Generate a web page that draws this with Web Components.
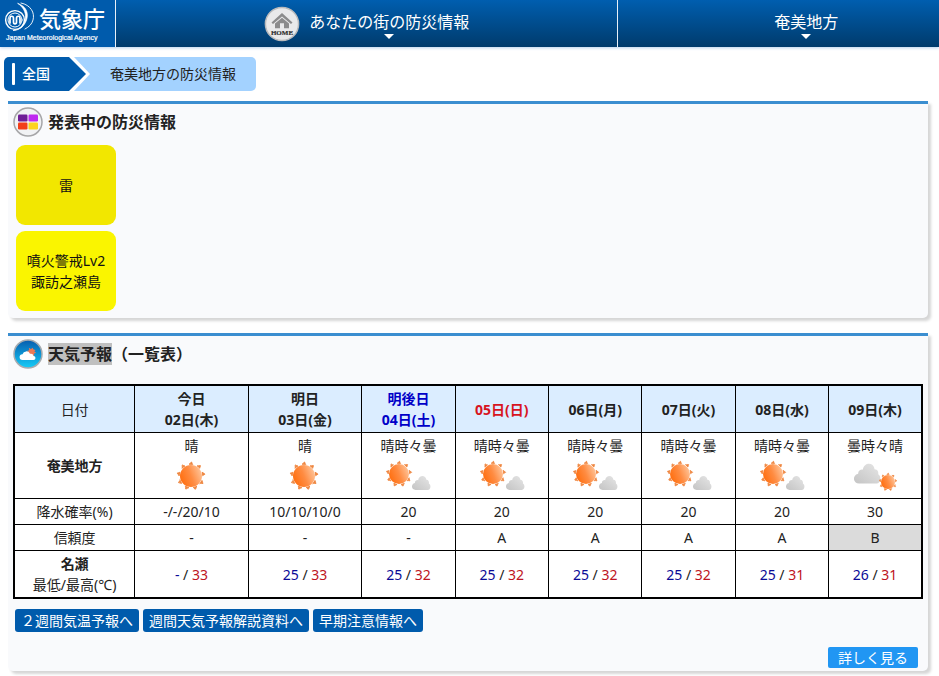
<!DOCTYPE html>
<html lang="ja">
<head>
<meta charset="utf-8">
<meta name="viewport" content="width=device-width, initial-scale=1">
<title>奄美地方の防災情報</title>
<style>
  body {
    margin: 0;
    background: #fff;
    color: #222;
    font-family: "Noto Sans", "Noto Sans CJK JP", sans-serif;
    font-size: 14px;
    line-height: 21px;
  }
  main { padding: 0 11px 5px 8px; display: grid; gap: 15px; }
  mark { background: #c0c0c0; color: inherit; }
  .more { text-align: right; margin: 15px 5px 0 0; }
  .links { display: flex; flex-wrap: wrap; gap: 4px; padding-left: 2px; margin-top: 10px; }
</style>
</head>
<body>
<site-header>
  <nav-entry slot="home" icon>あなたの街の防災情報</nav-entry>
  <nav-entry slot="area">奄美地方</nav-entry>
</site-header>
<bread-crumb>
  <span slot="root">全国</span>
  <span slot="current">奄美地方の防災情報</span>
</bread-crumb>
<main>
  <info-card icon="warning">
    <span slot="title">発表中の防災情報</span>
    <alert-list>
      <alert-tile tone="thunder">雷</alert-tile>
      <alert-tile tone="volcano">噴火警戒Lv2<br>諏訪之瀬島</alert-tile>
    </alert-list>
  </info-card>
  <info-card icon="weather">
    <span slot="title"><mark>天気予報</mark>（一覧表）</span>
    <forecast-table></forecast-table>
    <div class="links">
      <link-button>２週間気温予報へ</link-button>
      <link-button>週間天気予報解説資料へ</link-button>
      <link-button>早期注意情報へ</link-button>
    </div>
    <div class="more"><link-button kind="more">詳しく見る</link-button></div>
  </info-card>
</main>

<script>
function define(name, build) {
  customElements.define(name, class extends HTMLElement {
    constructor() { super(); this.attachShadow({ mode: "open" }); }
    connectedCallback() { this.shadowRoot.innerHTML = build(this); }
  });
}

define("site-header", () => `
  <style>
    :host { display: block; color: #fff; background: linear-gradient(#005eaf, #003b6c); box-shadow: 0 1px 3px #b9d2ee; }
    header { display: flex; height: 47px; }
    ::slotted([slot="home"]) { flex: 502; border-left: 1px solid #e8f0f8; border-right: 1px solid #e8f0f8; }
    ::slotted([slot="area"]) { flex: 321; }
  </style>
  <header><agency-logo></agency-logo><slot name="home"></slot><slot name="area"></slot></header>`);

define("agency-logo", () => `
  <style>
    :host { display: block; flex: 0 0 115px; background: #005bac; }
    a { display: grid; grid-template-columns: 34px auto; grid-template-rows: 31px 12px; column-gap: 1px; justify-content: start; padding: 1px 0 0 4px; color: #fff; text-decoration: none; }
    svg { display: block; }
    strong { font: 500 22px/32px "Noto Sans CJK JP", sans-serif; }
    small { grid-column: 1 / 3; padding: 1px 0 0 2px; font: 7px/9px "Liberation Sans", sans-serif; white-space: nowrap; -webkit-text-stroke: .2px #fff; }
  </style>
  <a href="#">
    <svg width="34" height="31" viewBox="0 0 34 31" fill="none" stroke="#fff" stroke-linecap="round">
      <circle cx="11" cy="19" r="9.4" stroke-width="1.4"/>
      <circle cx="11" cy="19" r="7" stroke-width="1"/>
      <path d="M6 22v-4.500c0-3 3.500-3 3.500 0v3.500c0 2.500 3 2.500 3 0v-3.500c0-3 3.500-3 3.500 0v4.500" stroke-width="1.700"/>
      <path d="M14 2.500C22 5 25 12 22.500 19C20.500 25 15 29.500 9 29.500C17 28.500 21 23 21.500 17C22 11 19 6 14 2.500Z" fill="#fff" stroke-width=".7"/>
      <path d="M17 2c10 2 14 10 12 17c-1 4-4 7-8 9" stroke-width=".9"/>
    </svg>
    <strong>気象庁</strong>
    <small>Japan Meteorological Agency</small>
  </a>`);

define("nav-entry", el => `
  <style>
    :host { display: flex; justify-content: center; }
    button { all: unset; display: flex; align-items: center; gap: 9px; cursor: pointer; font: 400 16px/24px "Noto Sans", "Noto Sans CJK JP", sans-serif; }
    .gap, svg.home { width: 36px; height: 36px; }
    .label { display: grid; justify-items: center; padding-top: 2px; }
    .arrow { width: 10px; height: 5px; }
    :host(:not([icon])) button { padding-left: 10px; }
  </style>
  <button type="button">
    ${el.hasAttribute("icon") ? `
    <svg class="home" viewBox="0 0 36 36">
      <circle cx="18" cy="18" r="16.600" fill="#e9e9ea" stroke="#b9babc" stroke-width="1.500"/>
      <path d="M7.500 16.500 18 7l10.500 9.500-1.500 1.500L18 10.500 9 18Z" fill="#8b8b8c"/>
      <path d="M11 17.500 18 11.800l7 5.700v4.800h-5v-5h-4v5h-5Z" fill="#8b8b8c"/>
      <text x="18" y="28.500" text-anchor="middle" font-family="Liberation Serif, serif" font-size="7" font-weight="700" fill="#303030" stroke="#303030" stroke-width=".2">HOME</text>
    </svg>` : `<span class="gap"></span>`}
    <span class="label"><slot></slot>
      <svg class="arrow" viewBox="0 0 10 5"><path d="M0 0h10L5 5Z" fill="#fff"/></svg>
    </span>
  </button>`);

define("bread-crumb", () => `
  <style>
    :host { display: block; padding: 10px 4px; }
    nav { display: flex; line-height: 34px; }
    a, span { display: flex; align-items: center; text-decoration: none; }
    a { gap: 7px; padding: 0 36px 0 8px; color: #fff; font-weight: 500; background: #005bac; border-radius: 5px 0 0 5px;
        clip-path: polygon(0 0, calc(100% - 17px) 0, 100% 50%, calc(100% - 17px) 100%, 0 100%); }
    a::before { content: ""; width: 3px; height: 22px; border-radius: 1px; background: #fff; }
    span { margin-left: -12px; padding: 0 20px 0 36px; background: #a3d2ff; border-radius: 0 5px 5px 0;
        clip-path: polygon(0 0, 100% 0, 100% 100%, 0 100%, 16px 50%); }
  </style>
  <nav><a href="#"><slot name="root"></slot></a><span><slot name="current"></slot></span></nav>`);

const cardIcons = {
  warning: `
    <circle cx="15" cy="15" r="14" fill="#f1f2f4" stroke="#a6a6a8" stroke-width="1.500"/>
    <rect x="5" y="7.500" width="9.500" height="7" rx="1.200" fill="#6f1d96"/>
    <rect x="15.500" y="7.500" width="9.500" height="7" rx="1.200" fill="#bf28f0"/>
    <rect x="5" y="15.500" width="9.500" height="7" rx="1.200" fill="#f33e18"/>
    <rect x="15.500" y="15.500" width="9.500" height="7" rx="1.200" fill="#fcd321"/>`,
  weather: `
    <defs><linearGradient id="sky" x2="0" y2="1"><stop stop-color="#075cae"/><stop offset="1" stop-color="#14cdf8"/></linearGradient></defs>
    <circle cx="15" cy="15" r="14" fill="url(#sky)" stroke="#a6abb0" stroke-width="1.500"/>
    <circle cx="18.500" cy="13" r="3.200" fill="#ee7954" stroke="#ee7954" stroke-dasharray="1 1.500" stroke-width="2"/>
    <path d="M9.500 21a2.900 2.900 0 0 1 0-5.800 4 4 0 0 1 7.500-.4 2.800 2.800 0 0 1 3.500 2.200 2 2 0 0 1 0 4Z" fill="#fff"/>`
};

define("info-card", el => `
  <style>
    :host { display: block; padding: 3px 5px; background: #f9fafc; border-top: 3px solid #3b8ed0; border-radius: 0 0 5px 5px; box-shadow: 3px 3px 3px #d6d6d6; }
    h2 { display: flex; align-items: center; gap: 5px; margin: 0; font-size: 16px; line-height: 24px; font-weight: 700; }
    svg { flex: none; }
  </style>
  <section>
    <h2><svg width="30" height="30" viewBox="0 0 30 30">${cardIcons[el.getAttribute("icon")]}</svg><slot name="title"></slot></h2>
    <slot></slot>
  </section>`);

define("alert-list", () => `
  <style>:host { display: flex; flex-direction: column; align-items: start; gap: 6px; padding: 8px 3px 4px; }</style>
  <slot></slot>`);

define("alert-tile", () => `
  <style>
    :host { display: grid; place-items: center; width: 100px; height: 80px; border-radius: 9px; text-align: center; color: #111; }
    :host([tone="thunder"]) { background: #f2e700; }
    :host([tone="volcano"]) { background: #faf500; }
  </style>
  <div><slot></slot></div>`);

define("link-button", () => `
  <style>
    :host { display: inline-block; }
    a { display: block; padding: 0 6px; border-radius: 3px; background: #005bac; color: #fff; line-height: 23px; text-decoration: none; }
    :host([kind="more"]) a { padding: 0 10px; border-radius: 2px; background: #2196f3; line-height: 21px; }
  </style>
  <a href="#"><slot></slot></a>`);

function sun(cx, cy, r) {
  let rays = "";
  for (let i = 0; i < 9; i++) {
    rays += `<path transform="translate(${cx} ${cy}) rotate(${i * 40}) scale(${r / 11})" d="M-2-11.800C-.8-11.800-.6-13.800.6-14C1-13 1.200-12 1.800-11.600Z" fill="#ee8640" stroke="#ee8640" stroke-width=".9"/>`;
  }
  return rays + `<circle cx="${cx}" cy="${cy}" r="${r}" fill="url(#sun)"/>`;
}
function cloud(x, y, s) {
  return `<path transform="translate(${x} ${y}) scale(${s})" d="M5 20C-1 20-2 12 4 10.500C4 7 7 6 8.500 6.500C10-1 19-1 20 6C23 6 24 9 23.500 11C27 13 26 20 22 20Z" fill="url(#cloud)"/>`;
}
const skies = {
  "晴": () => sun(29, 20, 11),
  "晴時々曇": () => sun(21, 18, 10) + cloud(34, 19.500, .72),
  "曇時々晴": () => cloud(9, 7, 1.030) + sun(43, 26, 7)
};

define("weather-icon", el => `
  <style>:host { display: block; } svg { display: block; margin: 0 auto; }</style>
  <svg width="60" height="40" viewBox="0 0 60 40" role="img" aria-hidden="true">
    <defs>
      <linearGradient id="sun" x1="0" y1=".7" x2="1" y2=".3"><stop stop-color="#ff6d0d"/><stop offset=".5" stop-color="#ff8c42"/><stop offset="1" stop-color="#ffc59a"/></linearGradient>
      <linearGradient id="cloud" x1="0" y1="1" x2="1" y2="0"><stop stop-color="#c4c4c4"/><stop offset="1" stop-color="#e6e6e6"/></linearGradient>
    </defs>
    ${skies[el.getAttribute("sky")]()}
  </svg>`);

const days = [
  { name: "今日", date: "02日(木)", sky: "晴", rain: "-/-/20/10", trust: "-", low: "-", high: 33 },
  { name: "明日", date: "03日(金)", sky: "晴", rain: "10/10/10/0", trust: "-", low: 25, high: 33 },
  { name: "明後日", date: "04日(土)", kind: "sat", sky: "晴時々曇", rain: "20", trust: "-", low: 25, high: 32 },
  { date: "05日(日)", kind: "sun", sky: "晴時々曇", rain: "20", trust: "A", low: 25, high: 32 },
  { date: "06日(月)", sky: "晴時々曇", rain: "20", trust: "A", low: 25, high: 32 },
  { date: "07日(火)", sky: "晴時々曇", rain: "20", trust: "A", low: 25, high: 32 },
  { date: "08日(水)", sky: "晴時々曇", rain: "20", trust: "A", low: 25, high: 31 },
  { date: "09日(木)", sky: "曇時々晴", rain: "30", trust: "B", low: 26, high: 31 }
];
const row = cell => days.map(cell).join("");

define("forecast-table", () => `
  <style>
    :host { display: block; margin-top: 15px; }
    table { width: 100%; table-layout: fixed; border-collapse: collapse; border: 2px solid #000; background: #fff; text-align: center; }
    col.head { width: 13.300%; } col.near { width: 12.500%; }
    th, td { padding: 2px 0; border: 1px solid #000; }
    thead th { background: #dbedff; }
    .plain { font-weight: 400; }
    .sat { color: #0000c8; } .sun { color: #d7141e; }
    .low { color: #0a0a96; } .high { color: #be1422; }
    .B { background: #dbdbdb; }
  </style>
  <table>
    <colgroup><col class="head"><col class="near"><col class="near"><col span="6"></colgroup>
    <thead><tr><th class="plain" scope="col">日付</th>${row(d => `<th scope="col" class="${d.kind || ""}">${d.name ? d.name + "<br>" : ""}${d.date}</th>`)}</tr></thead>
    <tbody>
      <tr><th scope="row">奄美地方</th>${row(d => `<td>${d.sky}<weather-icon sky="${d.sky}"></weather-icon></td>`)}</tr>
      <tr><th class="plain" scope="row">降水確率(%)</th>${row(d => `<td>${d.rain}</td>`)}</tr>
      <tr><th class="plain" scope="row">信頼度</th>${row(d => `<td class="${d.trust === "B" ? "B" : ""}">${d.trust}</td>`)}</tr>
      <tr><th class="plain" scope="row"><b>名瀬</b><br>最低/最高(℃)</th>${row(d => `<td><span class="low">${d.low}</span> / <span class="high">${d.high}</span></td>`)}</tr>
    </tbody>
  </table>`);
</script>
</body>
</html>
